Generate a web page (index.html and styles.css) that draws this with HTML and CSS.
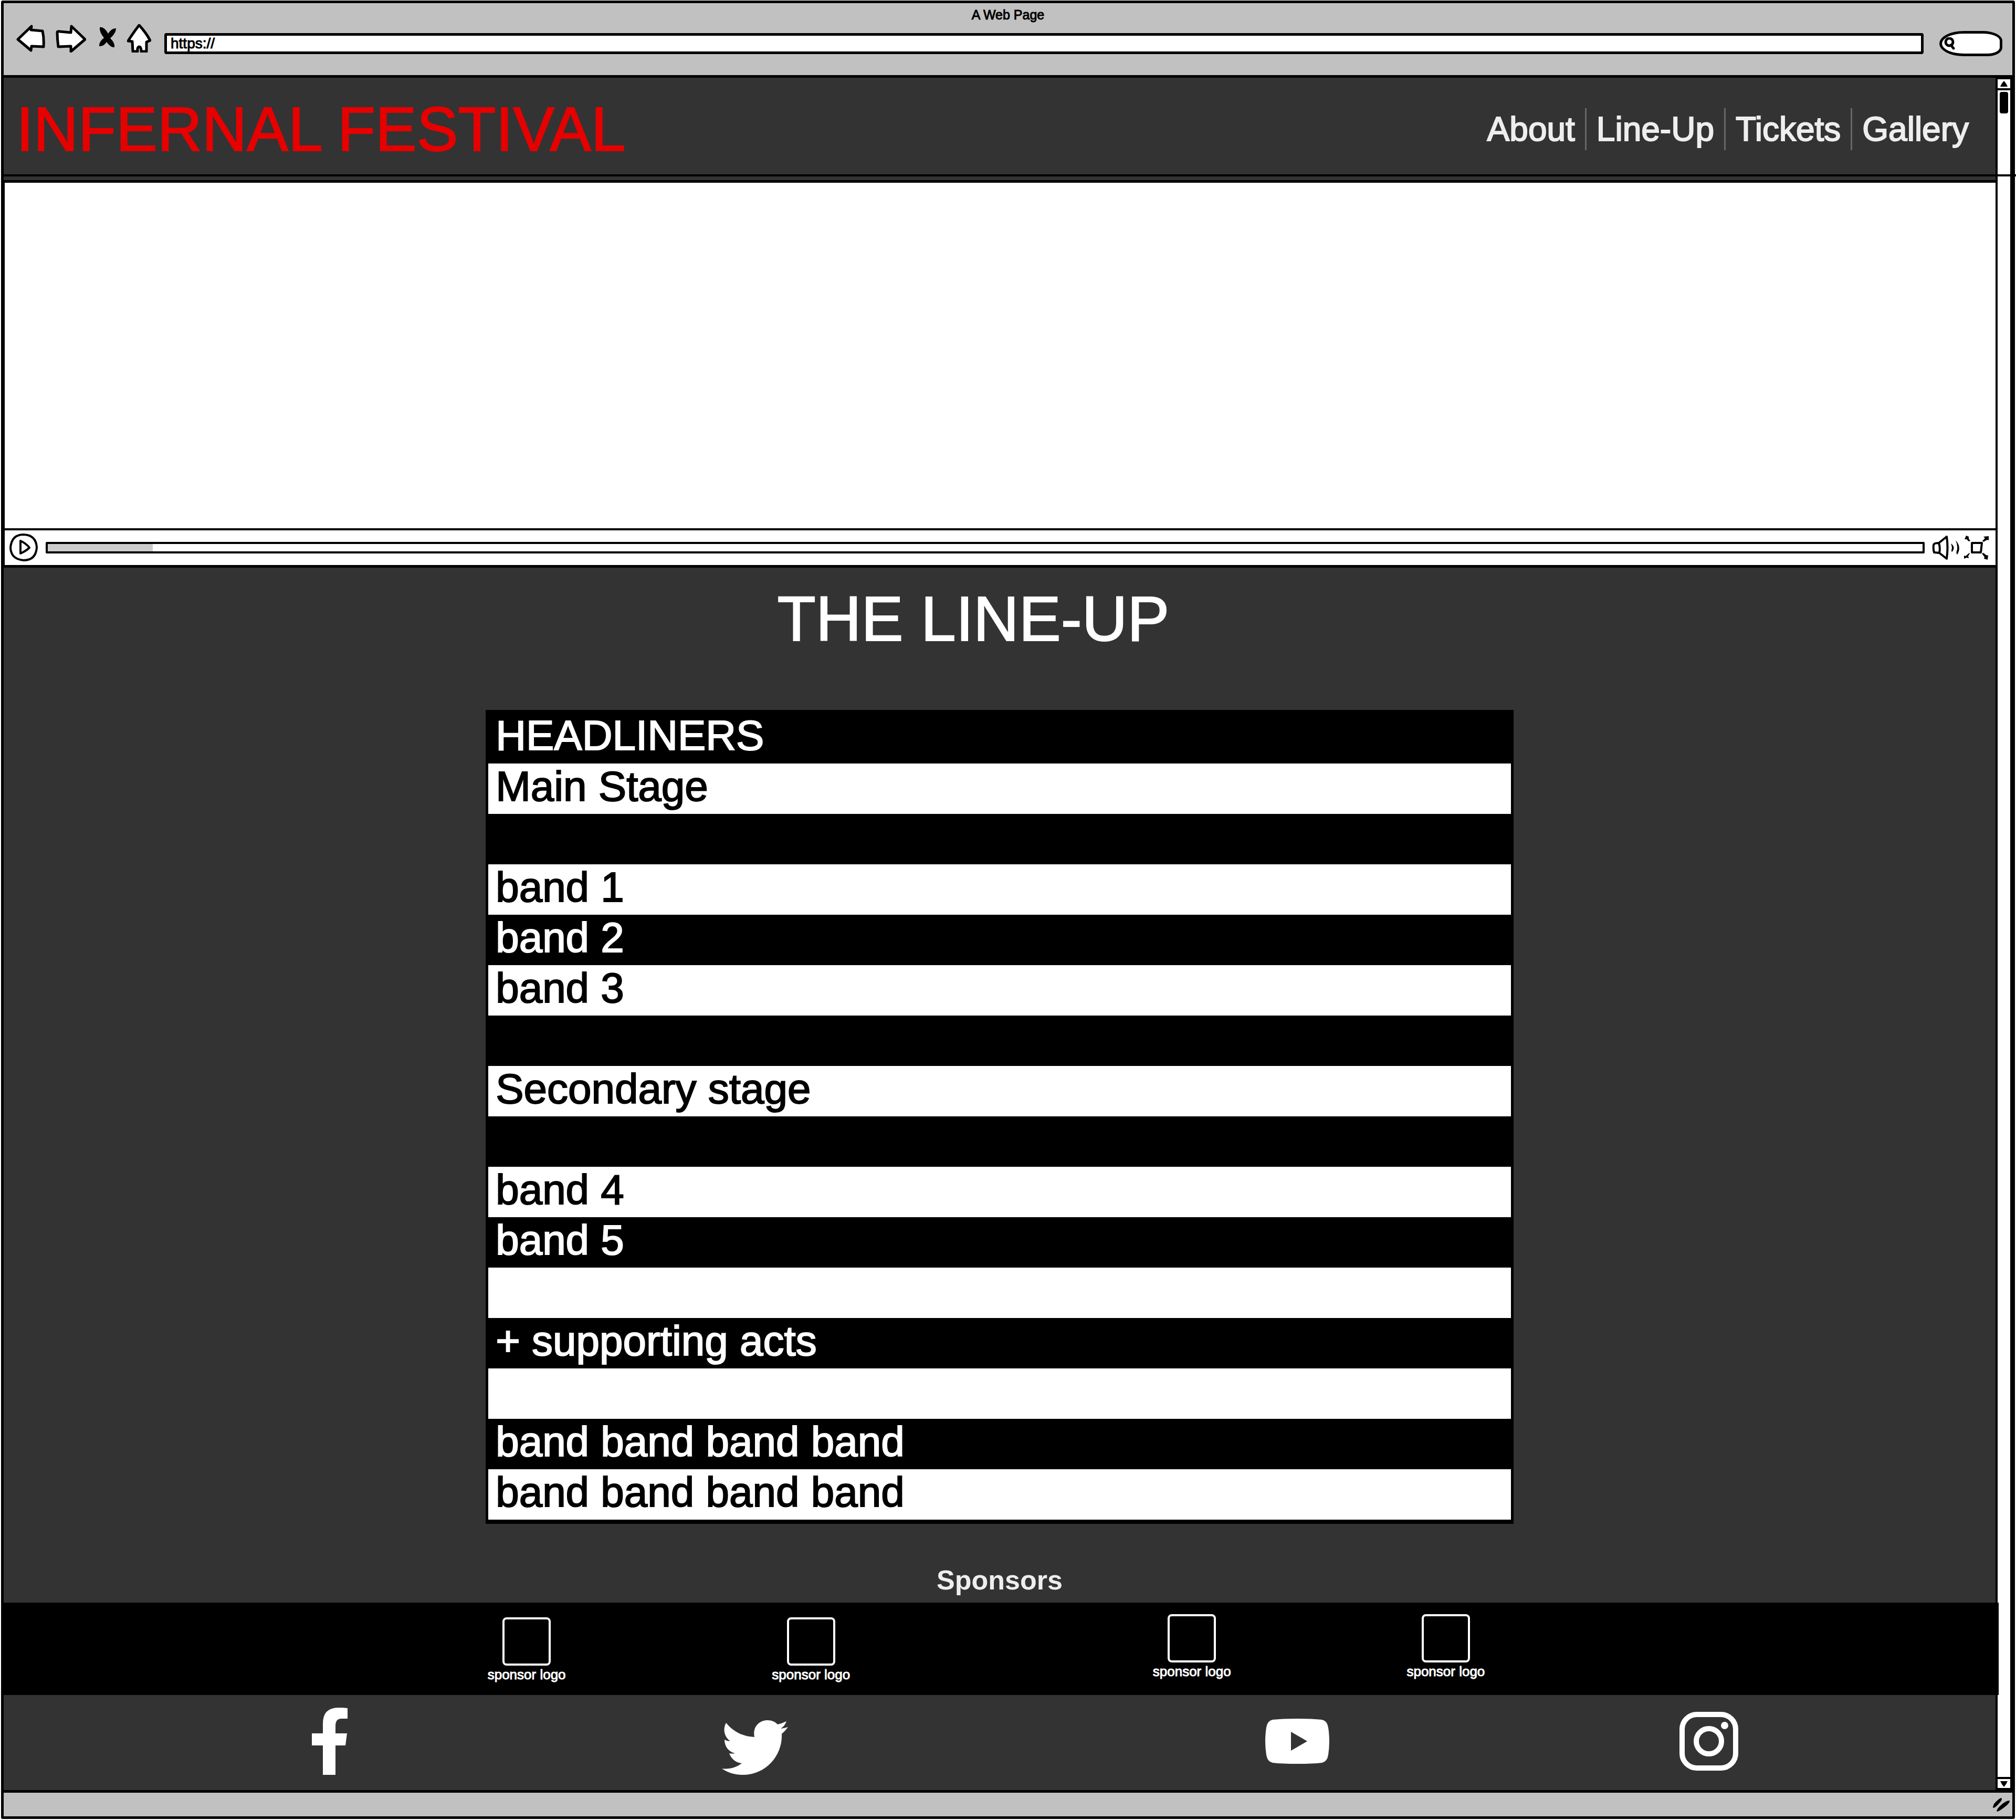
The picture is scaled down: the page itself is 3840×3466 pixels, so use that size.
FILE: index.html
```html
<!DOCTYPE html>
<html lang="en">
<head>
<meta charset="utf-8">
<title>Infernal Festival</title>
<link rel="stylesheet" href="styles.css">
</head>
<body>
<div class="window">
  <div class="toolbar">
    <p class="window-title">A Web Page</p>
    <div class="tools">
      <div class="tool-group">
        <button class="tool" aria-label="Back"><svg width="56" height="54" viewBox="0 0 56 54"><path class="sketch" d="M29 4 3 29 28 50 29 42 52 43Q53 26 50 13L28 11Z"/></svg></button>
        <button class="tool" aria-label="Forward"><svg width="59" height="54" viewBox="0 0 59 54"><path class="sketch" d="M31 4 57 29 30 52 30 42 6 43Q4 28 4 15 5 13 9 14L30 16Z"/></svg></button>
        <button class="tool" aria-label="Stop"><svg width="42" height="54" viewBox="-6 0 42 54"><path d="M2 6Q10 4 18 18 25 7 33 8 33 17 22 27 31 35 30 44 23 45 15 34 9 43 1 42 0 34 10 26 1 15 2 6Z"/></svg></button>
        <button class="tool" aria-label="Home"><svg width="46" height="54" viewBox="0 0 46 54"><path class="sketch" d="M23 2Q36 16 44 31L37 34 37 52 27 52Q27 43 23 43 19 44 20 52L11 52 10 33 2 32Q12 16 23 2Z"/></svg></button>
      </div>
      <input class="address" type="text" value="https://" aria-label="Address">
      <div class="search">
        <svg width="22" height="24" viewBox="0 0 22 24"><ellipse class="sketch" cx="10" cy="9" rx="7" ry="7"/><path class="sketch" d="M13 15 18 21"/></svg>
        <input class="search-input" type="search" aria-label="Search">
      </div>
    </div>
  </div>

  <div class="viewport">
    <div class="page">
      <header class="site-header">
        <h1 class="brand">INFERNAL FESTIVAL</h1>
        <nav class="nav">
          <a href="#about">About</a>
          <a href="#lineup">Line-Up</a>
          <a href="#tickets">Tickets</a>
          <a href="#gallery">Gallery</a>
        </nav>
      </header>

      <section class="video">
        <div class="screen"></div>
        <div class="controls">
          <button class="tool" aria-label="Play"><svg width="56" height="56" viewBox="0 0 56 56"><path class="line" d="M28 3Q52 4 53 28 51 52 28 52 4 50 3 28 5 3 28 3Z"/><path class="line" d="M22 15V39Q33 34 39 28 33 20 22 15Z"/></svg></button>
          <input class="seek" type="range" min="0" max="100" value="6" aria-label="Seek">
          <button class="tool" aria-label="Volume"><svg width="54" height="50" viewBox="0 0 54 50"><path class="line" d="M13 16 28 4Q31 24 28 46L14 35M13 16Q3 16 3 20 2 28 4 34L14 35Q16 25 13 16Z"/><path d="M36 17Q46 24 38 33 36 32 38 26 38 22 36 17ZM45 11Q57 24 48 38 45 36 48 28 49 20 45 11Z"/></svg></button>
          <button class="tool" aria-label="Full screen"><svg width="50" height="50" viewBox="0 0 50 50"><path class="line" d="M15 16H34L32 34H15Z"/><path d="M4 2 9 4 9 8 12 12 9 13 5 9 1 9ZM37 4 47 3 47 11 44 10 37 14 35 12 40 7ZM11 36 8 41 9 45 5 44 0 46 0 40 3 41 10 35ZM37 35 42 39 46 40 45 48 38 46 39 43 34 36Z"/></svg></button>
        </div>
      </section>

      <section class="lineup" id="lineup">
        <h2 class="lineup-title">THE LINE-UP</h2>
        <table class="bands">
          <thead><tr><th>HEADLINERS</th></tr></thead>
          <tbody>
            <tr><td>Main Stage</td></tr>
            <tr><td></td></tr>
            <tr><td>band 1</td></tr>
            <tr><td>band 2</td></tr>
            <tr><td>band 3</td></tr>
            <tr><td></td></tr>
            <tr><td>Secondary stage</td></tr>
            <tr><td></td></tr>
            <tr><td>band 4</td></tr>
            <tr><td>band 5</td></tr>
            <tr><td></td></tr>
            <tr><td>+ supporting acts</td></tr>
            <tr><td></td></tr>
            <tr><td>band band band band</td></tr>
            <tr><td>band band band band</td></tr>
          </tbody>
        </table>
      </section>

      <section class="sponsors">
        <h2 class="sponsors-title">Sponsors</h2>
        <div class="sponsor-row">
          <figure class="sponsor"><div class="logo"></div><figcaption>sponsor logo</figcaption></figure>
          <figure class="sponsor"><div class="logo"></div><figcaption>sponsor logo</figcaption></figure>
          <figure class="sponsor raised"><div class="logo"></div><figcaption>sponsor logo</figcaption></figure>
          <figure class="sponsor raised"><div class="logo"></div><figcaption>sponsor logo</figcaption></figure>
        </div>
      </section>

      <footer class="social">
        <a href="#facebook" aria-label="Facebook"><svg width="68" height="128" viewBox="0 0 68 128"><path d="M68 1V21H56Q45 21 45 35V49H67L64 72H45V128H21V72H0V49H21V30Q21 0 51 0 61 0 68 1Z"/></svg></a>
        <a class="low" href="#twitter" aria-label="Twitter"><svg width="126" height="104" viewBox="0 0 126 104"><path d="M126 13Q121 20 114 26C116 65 86 104 39 104 25 104 11 100 0 92 14 94 27 90 38 82 27 81 18 74 14 63Q20 64 25 63C12 60 5 49 5 37Q10 40 16 40C5 32 1 18 8 5 21 21 39 31 62 32 58 13 71 0 87 0 95 0 102 3 106 8Q115 6 123 2 120 11 112 16 120 15 126 13Z"/></svg></a>
        <a href="#youtube" aria-label="YouTube"><svg width="122" height="86" viewBox="0 0 122 86"><path fill-rule="evenodd" d="M61 0Q90 0 108 2 118 4 120 17 122 30 122 43T120 69Q118 82 108 84 90 86 61 86T14 84Q4 82 2 69 0 56 0 43T2 17Q4 4 14 2 32 0 61 0ZM49 25V61L80 43Z"/></svg></a>
        <a href="#instagram" aria-label="Instagram"><svg width="112" height="112" viewBox="0 0 112 112"><rect class="ring" x="5" y="5" width="102" height="102" rx="28"/><circle class="ring" cx="56" cy="56" r="24"/><circle cx="86" cy="26" r="7"/></svg></a>
      </footer>
    </div>

    <div class="scrollbar">
      <button class="arrow" aria-label="Scroll up"><svg width="14" height="12" viewBox="0 0 14 12"><path d="M7 0Q11 4 14 11H0Q3 4 7 0Z"/></svg></button>
      <div class="thumb"></div>
      <button class="arrow end" aria-label="Scroll down"><svg width="14" height="12" viewBox="0 0 14 12"><path d="M0 1H14Q11 8 7 12 3 8 0 1Z"/></svg></button>
    </div>
  </div>

  <div class="statusbar">
    <svg width="34" height="28" viewBox="0 0 34 28"><path d="M17 1Q20 4 14 10 6 20 1 20 1 14 6 9 14 1 17 1ZM33 6Q33 11 25 17 14 26 9 27 7 25 12 19 24 6 33 6Z"/></svg>
  </div>
</div>
</body>
</html>
```
FILE: styles.css
```css
* { box-sizing: border-box; }

body {
  margin: 0;
  background: #fff;
  font-family: "Liberation Sans", Arial, sans-serif;
}

h1, h2, p, figure { margin: 0; font-weight: 400; }
svg { display: block; }

.window {
  margin: 1px 2px 2px;
  border: 5px solid #000;
  border-radius: 3px;
  background: #c1c1c1;
}

.tool {
  padding: 0;
  border: 0;
  background: none;
}

.sketch { fill: #fff; stroke: #000; stroke-width: 5; stroke-linejoin: round; stroke-linecap: round; }
.line { fill: none; stroke: #000; stroke-width: 4; stroke-linejoin: round; stroke-linecap: round; }

/* Browser chrome */
.toolbar {
  height: 142px;
  padding-top: 8px;
  border-bottom: 5px solid #000;
}

.window-title {
  font-size: 25px;
  line-height: 28px;
  text-align: center;
  -webkit-text-stroke: 1px #000;
}

.tools {
  display: flex;
  align-items: center;
  padding: 4px 19px 0 24px;
}

.tool-group {
  display: flex;
  gap: 18px;
  margin-right: 25px;
  padding-bottom: 20px;
}

.address {
  flex: 1;
  min-width: 0;
  height: 40px;
  margin-right: 30px;
  padding: 0 7px;
  border: 5px solid #000;
  border-radius: 4px;
  background: #fff;
  color: #000;
  font: 28px/30px "Liberation Sans", Arial, sans-serif;
  -webkit-text-stroke: 1px #000;
}

.search {
  display: flex;
  align-items: center;
  width: 120px;
  height: 48px;
  padding-left: 4px;
  border: 5px solid #000;
  border-radius: 50px 40px 30px 50px / 26px 20px 18px 26px;
  background: #fff;
}

.search-input {
  flex: 1;
  min-width: 0;
  border: 0;
  background: none;
}

/* Page area */
.viewport {
  display: flex;
  background: #333;
}

.page {
  flex: 1;
  min-width: 0;
}

.site-header {
  position: relative;
  display: flex;
  justify-content: space-between;
  align-items: center;
  height: 195px;
  padding: 0 32px 0 24px;
}

/* The rule under the header runs on across the scrollbar. */
.site-header::after {
  content: "";
  position: absolute;
  left: 0;
  right: -39px;
  bottom: 7px;
  height: 4px;
  background: #000;
}

.brand {
  color: #e60000;
  font-size: 118px;
  line-height: 120px;
  -webkit-text-stroke: 2px #e60000;
}

.nav { display: flex; }

.nav a {
  padding: 0 19px;
  color: #eee;
  font-size: 64px;
  line-height: 80px;
  text-decoration: none;
  -webkit-text-stroke: 2px #eee;
}

.nav a + a { border-left: 3px solid #666; }

.video {
  border: 5px solid #000;
  border-right: 0;
  border-left-width: 2px;
  background: #fff;
}

.screen { height: 658px; }

.controls {
  display: flex;
  align-items: center;
  height: 70px;
  padding: 0 10px 0 8px;
  border-top: 4px solid #000;
}

.seek {
  flex: 1;
  min-width: 0;
  height: 22px;
  margin: 0 14px;
  border: 4px solid #000;
  border-radius: 2px;
  appearance: none;
  background: linear-gradient(to right, #ccc 5.6%, #fff 5.6%);
}

.seek::-webkit-slider-thumb {
  appearance: none;
  width: 0;
  height: 0;
}

.controls .tool + .tool { margin-left: 7px; }

/* Line-up */
.lineup { padding-top: 37px; }

.lineup-title {
  padding-right: 100px;
  color: #fff;
  font-size: 120px;
  line-height: 120px;
  text-align: center;
  -webkit-text-stroke: 2px #fff;
}

.bands {
  width: 51.6%;
  margin: 114px auto 0;
  border-spacing: 0;
  border: 5px solid #000;
  border-width: 0 5px 8px;
  background: #000;
  color: #fff;
  font-size: 80px;
  line-height: 84px;
}

.bands th, .bands td {
  height: 96px;
  padding: 2px 14px 10px;
  font-weight: 400;
  text-align: left;
  -webkit-text-stroke: 2px currentColor;
}

.bands th {
  height: 102px;
  padding-bottom: 6px;
}

/* Stripes alternate, starting white below the black heading. */
.bands tbody tr:nth-child(odd) {
  background: #fff;
  color: #000;
}

/* Sponsors */
.sponsors-title {
  padding: 81px 0 17px;
  color: #eee;
  font-size: 52px;
  font-weight: 700;
  line-height: 52px;
  text-align: center;
}

.sponsor-row {
  position: relative;
  display: grid;
  grid-template-columns: 926fr 152px 390fr 152px 574fr 152px 332fr 152px 978fr;
  height: 176px;
  margin: 0 -6px 0 -5px;
  padding-top: 28px;
  background: #000;
}

.sponsor {
  display: flex;
  flex-direction: column;
  align-items: center;
  gap: 2px;
  color: #fff;
  font-size: 26px;
  line-height: 30px;
  white-space: nowrap;
  -webkit-text-stroke: 1px #fff;
}

.sponsor:nth-child(1) { grid-column: 2; }
.sponsor:nth-child(2) { grid-column: 4; }
.sponsor:nth-child(3) { grid-column: 6; }
.sponsor:nth-child(4) { grid-column: 8; }
.raised { margin-top: -6px; }

.logo {
  width: 92px;
  height: 92px;
  border: 4px solid #fff;
  border-radius: 8px;
}

/* Social links */
.social {
  display: grid;
  grid-template-columns: 587fr 68px 713fr 126px 910fr 122px 667fr 112px 490fr;
  align-items: center;
  height: 181px;
  padding-bottom: 5px;
  fill: #fff;
}

.social a:nth-child(1) { grid-column: 2; }
.social a:nth-child(2) { grid-column: 4; }
.social a:nth-child(3) { grid-column: 6; }
.social a:nth-child(4) { grid-column: 8; }
.social .low { padding-top: 24px; }
.ring { fill: none; stroke: #fff; stroke-width: 10; }

/* Scrollbar and status bar */
.scrollbar {
  display: flex;
  flex-direction: column;
  width: 32px;
  border: 4px solid #000;
  border-top-width: 3px;
  background: #fff;
}

.arrow {
  display: flex;
  justify-content: center;
  align-items: center;
  height: 21px;
  padding: 0;
  border: 0;
  border-bottom: 4px solid #000;
  background: #fff;
}

.thumb {
  width: 16px;
  height: 41px;
  margin: 3px auto;
  border-radius: 4px;
  background: #000;
}

.arrow.end {
  margin-top: auto;
  border-top: 4px solid #000;
  border-bottom: 0;
}

.statusbar {
  display: flex;
  justify-content: flex-end;
  align-items: center;
  height: 50px;
  padding-right: 4px;
  border-top: 5px solid #000;
}
```
